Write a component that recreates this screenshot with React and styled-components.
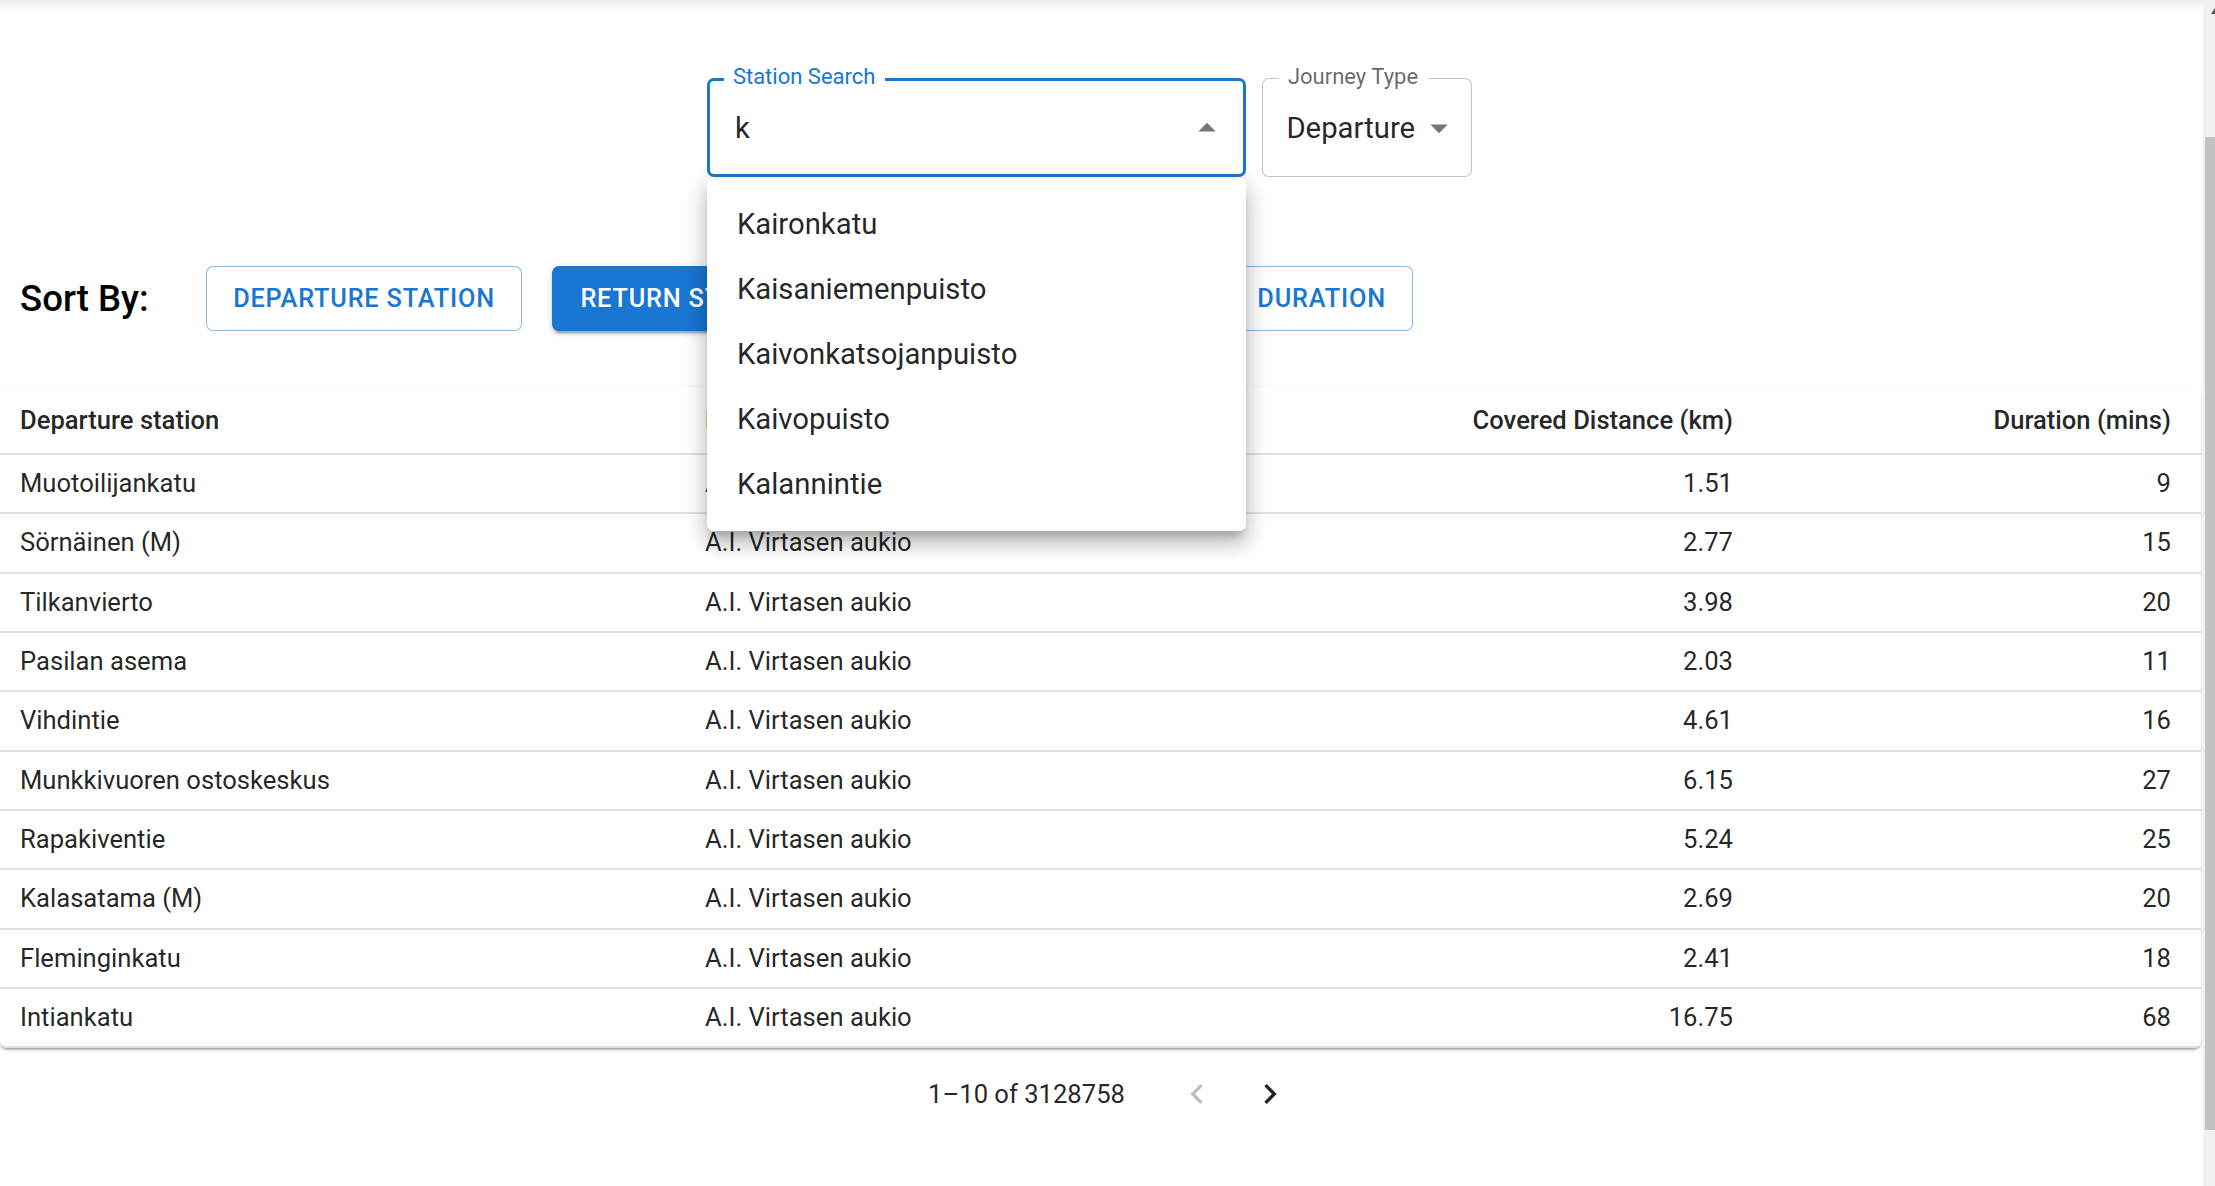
import React from 'react'
import styled, { createGlobalStyle } from 'styled-components'

// Data
const options = ['Kaironkatu', 'Kaisaniemenpuisto', 'Kaivonkatsojanpuisto', 'Kaivopuisto', 'Kalannintie']

const sortButtons = [
  { label: 'Departure station', active: false },
  { label: 'Return station', active: true },
  { label: 'Covered distance', active: false, wide: true },
  { label: 'Duration', active: false }
]

const journeys = [
  ['Muotoilijankatu', 'A.I. Virtasen aukio', '1.51', '9'],
  ['Sörnäinen (M)', 'A.I. Virtasen aukio', '2.77', '15'],
  ['Tilkanvierto', 'A.I. Virtasen aukio', '3.98', '20'],
  ['Pasilan asema', 'A.I. Virtasen aukio', '2.03', '11'],
  ['Vihdintie', 'A.I. Virtasen aukio', '4.61', '16'],
  ['Munkkivuoren ostoskeskus', 'A.I. Virtasen aukio', '6.15', '27'],
  ['Rapakiventie', 'A.I. Virtasen aukio', '5.24', '25'],
  ['Kalasatama (M)', 'A.I. Virtasen aukio', '2.69', '20'],
  ['Fleminginkatu', 'A.I. Virtasen aukio', '2.41', '18'],
  ['Intiankatu', 'A.I. Virtasen aukio', '16.75', '68']
]

const columns = [
  { title: 'Departure station', width: 685, align: 'left' },
  { title: 'Return station', width: 650, align: 'left' },
  { title: 'Covered Distance (km)', width: 428, align: 'right' },
  { title: 'Duration (mins)', width: 438, align: 'right' }
]

// Icons
const Icon = ({ d, size = 42, color = 'rgba(0,0,0,0.54)' }) => (
  <svg width={size} height={size} viewBox='0 0 24 24' fill={color}>
    <path d={d} />
  </svg>
)

const ARROW_UP = 'M7 14l5-5 5 5z'
const ARROW_DOWN = 'M7 10l5 5 5-5z'
const CHEVRON_LEFT = 'M15.41 16.59L10.83 12l4.58-4.59L14 6l-6 6 6 6 1.41-1.41z'
const CHEVRON_RIGHT = 'M8.59 16.59L13.17 12 8.59 7.41 10 6l6 6-6 6-1.41-1.41z'

// App
export default function App () {
  return (
    <>
      <GlobalStyle />
      <Screen>
        <Main>
          <TopShade />

          <SearchRow>
            <Field $focused $width='539px'>
              <FieldLabel $focused>Station Search</FieldLabel>
              <FieldValue>k</FieldValue>
              <IconSlot $left='2px' $right='15px'>
                <Icon d={ARROW_UP} />
              </IconSlot>
              <Listbox>
                {options.map(option => <Option key={option}>{option}</Option>)}
              </Listbox>
            </Field>

            <Field>
              <FieldLabel>Journey Type</FieldLabel>
              <FieldValue>Departure</FieldValue>
              <IconSlot $left='3px' $right='11px'>
                <Icon d={ARROW_DOWN} />
              </IconSlot>
            </Field>
          </SearchRow>

          <SortRow>
            <SortLabel>Sort By:</SortLabel>
            {sortButtons.map(b => (
              <SortButton key={b.label} $active={b.active} $wide={b.wide}>{b.label}</SortButton>
            ))}
          </SortRow>

          <TablePaper>
            <Table>
              <colgroup>
                {columns.map(c => <col key={c.title} style={{ width: c.width }} />)}
              </colgroup>
              <thead>
                <tr>
                  {columns.map(c => <HeadCell key={c.title} $align={c.align}>{c.title}</HeadCell>)}
                </tr>
              </thead>
              <tbody>
                {journeys.map((row, i) => (
                  <tr key={i}>
                    {row.map((value, j) => (
                      <BodyCell key={j} $align={columns[j].align}>{value}</BodyCell>
                    ))}
                  </tr>
                ))}
              </tbody>
            </Table>
          </TablePaper>

          <Pagination>
            <PageInfo>1–10 of 3128758</PageInfo>
            <PageActions>
              <PageButton disabled>
                <Icon d={CHEVRON_LEFT} size={40} color='rgba(0,0,0,0.26)' />
              </PageButton>
              <PageButton>
                <Icon d={CHEVRON_RIGHT} size={40} color='rgba(0,0,0,0.87)' />
              </PageButton>
            </PageActions>
          </Pagination>
        </Main>

        <ScrollBar>
          <ScrollArrow>
            <svg width='12' height='17' viewBox='0 0 12 17'>
              <path d='M8 14 L12 8 L16 14 Z' fill='#505050' />
            </svg>
          </ScrollArrow>
          <ScrollThumb />
        </ScrollBar>
      </Screen>
    </>
  )
}

const GlobalStyle = createGlobalStyle`
  html, body {
    margin: 0;
    padding: 0;
    background: #fff;
    overflow: hidden;
  }
  body {
    font-family: Roboto, "Helvetica Neue", Arial, sans-serif;
    color: rgba(0, 0, 0, 0.87);
  }
  * { box-sizing: border-box; }
`

const Screen = styled.div`
  display: flex;
  width: 2215px;
  height: 1186px;
  overflow: hidden;
`

const Main = styled.div`
  flex: 1;
  min-width: 0;
  display: flex;
  flex-direction: column;
  padding-right: 2px;
`

const TopShade = styled.div`
  height: 12px;
  margin-right: -2px;
  background: linear-gradient(rgba(0, 0, 0, 0.07), rgba(0, 0, 0, 0));
`

const SearchRow = styled.div`
  display: flex;
  justify-content: center;
  gap: 16px;
  margin-top: 66px;
  padding-right: 22px;
`

const Field = styled.div`
  position: relative;
  display: flex;
  align-items: center;
  height: 99px;
  width: ${p => p.$width || 'auto'};
  padding-left: ${p => p.$focused ? '25px' : '23.5px'};
  border: ${p => p.$focused ? '3px solid #1976d2' : '1.75px solid rgba(0, 0, 0, 0.23)'};
  border-radius: 7px;
  background: #fff;
`

const FieldLabel = styled.span`
  position: absolute;
  top: ${p => p.$focused ? '-18px' : '-16px'};
  left: ${p => p.$focused ? '14px' : '16px'};
  padding: 0 10px 0 9px;
  background: #fff;
  font-size: 22px;
  line-height: 28px;
  color: ${p => p.$focused ? '#1976d2' : 'rgba(0, 0, 0, 0.6)'};
`

const FieldValue = styled.span`
  flex: 1;
  font-size: 29.3px;
  line-height: 40px;
  color: rgba(0, 0, 0, 0.87);
  white-space: nowrap;
`

const IconSlot = styled.span`
  display: flex;
  margin-left: ${p => p.$left};
  margin-right: ${p => p.$right};
`

const Listbox = styled.ul`
  position: absolute;
  top: calc(100% + 5px);
  left: -3px;
  right: -3px;
  z-index: 10;
  margin: 0;
  padding: 13px 0 14px;
  list-style: none;
  background: #fff;
  border-radius: 7px;
  box-shadow: 0px 9px 9px -5px rgba(0, 0, 0, 0.2), 0px 14px 17px 2px rgba(0, 0, 0, 0.14), 0px 5px 25px 4px rgba(0, 0, 0, 0.12);
`

const Option = styled.li`
  padding: 0 30px;
  font-size: 29.3px;
  line-height: 65px;
  color: rgba(0, 0, 0, 0.87);
`

const SortRow = styled.div`
  display: flex;
  align-items: center;
  gap: 30px;
  margin-top: 89px;
  padding-left: 20px;
`

const SortLabel = styled.span`
  margin-right: 27px;
  font-size: 36.6px;
  font-weight: 500;
  color: #000;
`

const SortButton = styled.button`
  height: 65px;
  padding: ${p => p.$active ? '0 28px' : p.$wide ? '0 47px' : '0 26.5px'};
  border: ${p => p.$active ? 'none' : '1.5px solid rgba(25, 118, 210, 0.5)'};
  border-radius: 7px;
  background: ${p => p.$active ? '#1976d2' : '#fff'};
  color: ${p => p.$active ? '#fff' : '#1976d2'};
  box-shadow: ${p => p.$active ? '0px 5px 2px -3px rgba(0,0,0,0.2), 0px 3px 3px 0px rgba(0,0,0,0.14), 0px 2px 9px 0px rgba(0,0,0,0.12)' : 'none'};
  font-family: Roboto, sans-serif;
  font-size: 25.3px;
  font-weight: 500;
  letter-spacing: 0.8px;
  text-transform: uppercase;
  white-space: nowrap;
`

const TablePaper = styled.div`
  margin-top: 56px;
  background: #fff;
  border-radius: 7px;
  overflow: hidden;
  box-shadow: 0px 3px 2px -2px rgba(0, 0, 0, 0.2), 0px 2px 2px 0px rgba(0, 0, 0, 0.14), 0px 2px 5px 0px rgba(0, 0, 0, 0.12);
`

const Table = styled.table`
  width: 100%;
  border-collapse: collapse;
  table-layout: fixed;
`

const HeadCell = styled.th`
  padding: 1px 30px 0 20px;
  font-size: 25.6px;
  font-weight: 500;
  line-height: 65px;
  text-align: ${p => p.$align};
  color: rgba(0, 0, 0, 0.87);
  border-bottom: 2px solid #e0e0e0;
  white-space: nowrap;
`

const BodyCell = styled.td`
  padding: 0 30px 0 20px;
  font-size: 25.6px;
  line-height: 57.33px;
  text-align: ${p => p.$align};
  color: rgba(0, 0, 0, 0.87);
  border-bottom: 2px solid #e0e0e0;
  white-space: nowrap;
`

const Pagination = styled.div`
  display: flex;
  align-items: center;
  justify-content: center;
  height: 91px;
  padding-left: 34px;
`

const PageInfo = styled.span`
  font-size: 25.6px;
  color: rgba(0, 0, 0, 0.87);
`

const PageActions = styled.div`
  display: flex;
  margin-left: 36px;
`

const PageButton = styled.button`
  display: flex;
  align-items: center;
  justify-content: center;
  width: 73px;
  height: 73px;
  padding: 0;
  border: none;
  border-radius: 50%;
  background: transparent;
`

const ScrollBar = styled.div`
  display: flex;
  flex-direction: column;
  width: 12px;
  background: #f1f1f1;
`

const ScrollArrow = styled.div`
  display: flex;
  height: 17px;
`

const ScrollThumb = styled.div`
  height: 993px;
  margin: 120px 0 0 2px;
  background: #c1c1c1;
`
